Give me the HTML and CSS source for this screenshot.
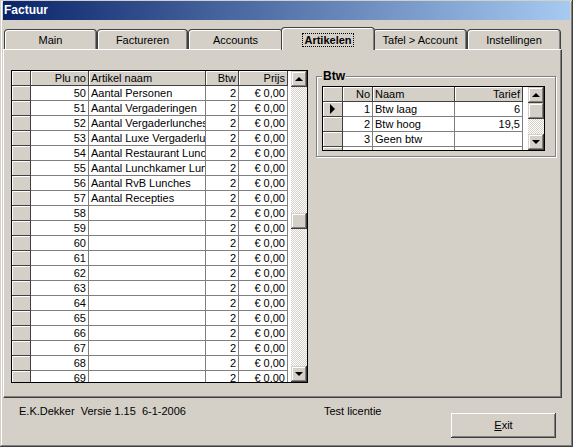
FILE: index.html
```html
<!DOCTYPE html>
<html lang="nl">
<head>
    <meta charset="UTF-8">
    <meta name="viewport" content="width=device-width, initial-scale=1.0">
    <title>Factuur</title>
    <link rel="stylesheet" href="styles.css">
</head>
<body>
    <div class="window">
        <div class="titlebar">Factuur</div>

        <div class="tabs">
            <div class="tab tab-main">Main</div>
            <div class="tab tab-fact">Factureren</div>
            <div class="tab tab-acc">Accounts</div>
            <div class="tab tab-art active"><span class="focus">Artikelen</span></div>
            <div class="tab tab-tafel">Tafel &gt; Account</div>
            <div class="tab tab-inst">Instellingen</div>
        </div>

        <div class="sheet">
            <!-- artikelen -->
            <div class="grid main-grid">
                <div class="grid-body">
                    <div class="row head"><span class="ind"></span><span class="c-plu num">Plu no</span><span class="c-naam">Artikel naam</span><span class="c-btw num">Btw</span><span class="c-prijs num">Prijs</span></div>
                    <div class="row"><span class="ind"></span><span class="c-plu num">50</span><span class="c-naam">Aantal Personen</span><span class="c-btw num">2</span><span class="c-prijs num">€ 0,00</span></div>
                    <div class="row"><span class="ind"></span><span class="c-plu num">51</span><span class="c-naam">Aantal Vergaderingen</span><span class="c-btw num">2</span><span class="c-prijs num">€ 0,00</span></div>
                    <div class="row"><span class="ind"></span><span class="c-plu num">52</span><span class="c-naam">Aantal Vergaderlunches</span><span class="c-btw num">2</span><span class="c-prijs num">€ 0,00</span></div>
                    <div class="row"><span class="ind"></span><span class="c-plu num">53</span><span class="c-naam">Aantal Luxe Vergaderlunches</span><span class="c-btw num">2</span><span class="c-prijs num">€ 0,00</span></div>
                    <div class="row"><span class="ind"></span><span class="c-plu num">54</span><span class="c-naam">Aantal Restaurant Lunches</span><span class="c-btw num">2</span><span class="c-prijs num">€ 0,00</span></div>
                    <div class="row"><span class="ind"></span><span class="c-plu num">55</span><span class="c-naam">Aantal Lunchkamer Lunches</span><span class="c-btw num">2</span><span class="c-prijs num">€ 0,00</span></div>
                    <div class="row"><span class="ind"></span><span class="c-plu num">56</span><span class="c-naam">Aantal RvB Lunches</span><span class="c-btw num">2</span><span class="c-prijs num">€ 0,00</span></div>
                    <div class="row"><span class="ind"></span><span class="c-plu num">57</span><span class="c-naam">Aantal Recepties</span><span class="c-btw num">2</span><span class="c-prijs num">€ 0,00</span></div>
                    <div class="row"><span class="ind"></span><span class="c-plu num">58</span><span class="c-naam"></span><span class="c-btw num">2</span><span class="c-prijs num">€ 0,00</span></div>
                    <div class="row"><span class="ind"></span><span class="c-plu num">59</span><span class="c-naam"></span><span class="c-btw num">2</span><span class="c-prijs num">€ 0,00</span></div>
                    <div class="row"><span class="ind"></span><span class="c-plu num">60</span><span class="c-naam"></span><span class="c-btw num">2</span><span class="c-prijs num">€ 0,00</span></div>
                    <div class="row"><span class="ind"></span><span class="c-plu num">61</span><span class="c-naam"></span><span class="c-btw num">2</span><span class="c-prijs num">€ 0,00</span></div>
                    <div class="row"><span class="ind"></span><span class="c-plu num">62</span><span class="c-naam"></span><span class="c-btw num">2</span><span class="c-prijs num">€ 0,00</span></div>
                    <div class="row"><span class="ind"></span><span class="c-plu num">63</span><span class="c-naam"></span><span class="c-btw num">2</span><span class="c-prijs num">€ 0,00</span></div>
                    <div class="row"><span class="ind"></span><span class="c-plu num">64</span><span class="c-naam"></span><span class="c-btw num">2</span><span class="c-prijs num">€ 0,00</span></div>
                    <div class="row"><span class="ind"></span><span class="c-plu num">65</span><span class="c-naam"></span><span class="c-btw num">2</span><span class="c-prijs num">€ 0,00</span></div>
                    <div class="row"><span class="ind"></span><span class="c-plu num">66</span><span class="c-naam"></span><span class="c-btw num">2</span><span class="c-prijs num">€ 0,00</span></div>
                    <div class="row"><span class="ind"></span><span class="c-plu num">67</span><span class="c-naam"></span><span class="c-btw num">2</span><span class="c-prijs num">€ 0,00</span></div>
                    <div class="row"><span class="ind"></span><span class="c-plu num">68</span><span class="c-naam"></span><span class="c-btw num">2</span><span class="c-prijs num">€ 0,00</span></div>
                    <div class="row"><span class="ind"></span><span class="c-plu num">69</span><span class="c-naam"></span><span class="c-btw num">2</span><span class="c-prijs num">€ 0,00</span></div>
                </div>
                <div class="vscroll">
                    <div class="sb-btn"><span class="arrow-up"></span></div>
                    <div class="sb-gap"></div>
                    <div class="sb-thumb"></div>
                    <div class="sb-track"></div>
                    <div class="sb-btn"><span class="arrow-down"></span></div>
                </div>
            </div>

            <!-- btw tarieven -->
            <div class="groupbox">
                <span class="caption">Btw</span>
                <div class="grid btw-grid">
                    <div class="grid-body">
                        <div class="row head"><span class="ind"></span><span class="c-no num">No</span><span class="c-btwnaam">Naam</span><span class="c-tarief num">Tarief</span></div>
                        <div class="row"><span class="ind"><span class="ptr"></span></span><span class="c-no num">1</span><span class="c-btwnaam">Btw laag</span><span class="c-tarief num">6</span></div>
                        <div class="row"><span class="ind"></span><span class="c-no num">2</span><span class="c-btwnaam">Btw hoog</span><span class="c-tarief num">19,5</span></div>
                        <div class="row"><span class="ind"></span><span class="c-no num">3</span><span class="c-btwnaam">Geen btw</span><span class="c-tarief num"></span></div>
                        <div class="row"><span class="ind"></span><span class="c-no num">4</span><span class="c-btwnaam"></span><span class="c-tarief num"></span></div>
                    </div>
                    <div class="vscroll">
                        <div class="sb-btn"><span class="arrow-up"></span></div>
                        <div class="sb-thumb"></div>
                        <div class="sb-track"></div>
                        <div class="sb-btn"><span class="arrow-down"></span></div>
                    </div>
                </div>
            </div>
        </div>

        <div class="statusbar">
            <span class="info">E.K.Dekker  Versie 1.15  6-1-2006</span>
            <span class="licence">Test licentie</span>
            <button class="btn"><u>E</u>xit</button>
        </div>
    </div>
</body>
</html>
```

FILE: styles.css
```css
* {
    box-sizing: border-box;
    margin: 0;
    padding: 0;
}

body {
    font-family: 'Liberation Sans', Arial, sans-serif;
    font-size: 11px;
    color: #000;
    background-color: #d4d0c8;
}

.window {
    width: 573px;
    height: 447px;
    padding: 1px 3px 3px 3px;
    background-color: #d4d0c8;
    box-shadow: inset -1px -1px #404040, inset 1px 1px #d4d0c8, inset -2px -2px #808080, inset 2px 2px #fff;
    display: flex;
    flex-direction: column;
}

.titlebar {
    height: 19px;
    line-height: 19px;
    padding-left: 1px;
    color: #fff;
    font-size: 12px;
    font-weight: bold;
    background: linear-gradient(to right, #0a246a, #a6caf0);
}

/* tabs */
.tabs {
    display: flex;
    align-items: flex-end;
    height: 22px;
    margin-top: 7px;
    padding-left: 1px;
}

.tab {
    flex: none;
    height: 20px;
    line-height: 21px;
    text-align: center;
    background-color: #d4d0c8;
    border: 1px solid #404040;
    border-bottom: none;
    border-radius: 4px 4px 0 0;
    box-shadow: inset 1px 1px #fff, inset -1px 0 #808080;
}

.tab-main { width: 93px; }
.tab-fact { width: 91px; }
.tab-acc { width: 95px; }
.tab-art { width: 94px; }
.tab-tafel { width: 94px; }
.tab-inst { width: 94px; }

.tab.active {
    height: 23px;
    line-height: 25px;
    margin: 0 -2px -1px -2px;
    position: relative;
    z-index: 1;
    font-weight: bold;
}

.focus {
    outline: 1px dotted #000;
    padding: 0 1px;
}

.sheet {
    width: 559px;
    height: 349px;
    border: 1px solid;
    border-color: #fff #404040 #404040 #fff;
    box-shadow: inset -1px -1px #808080;
    padding: 20px 0 0 7px;
    display: flex;
    align-items: flex-start;
    gap: 8px;
}

/* grids */
.grid {
    display: flex;
    flex: none;
    border: 1px solid #000;
    background-color: #fff;
}

.main-grid {
    width: 297px;
    height: 313px;
}

.btw-grid {
    width: 223px;
    height: 65px;
}

.grid-body {
    flex: none;
    overflow: hidden;
}

.main-grid .grid-body { width: 279px; }
.btw-grid .grid-body { width: 205px; }

.row {
    display: flex;
    height: 15px;
}

.row > span {
    flex: none;
    height: 15px;
    line-height: 14px;
    padding: 0 2px;
    white-space: nowrap;
    overflow: hidden;
    border-right: 1px solid #808080;
    border-bottom: 1px solid #808080;
}

.row > .ind,
.head > span {
    background-color: #d4d0c8;
    border-color: #404040;
    box-shadow: inset 1px 1px #fff;
}

.ind {
    display: flex;
    align-items: center;
    justify-content: center;
}

.num {
    text-align: right;
}

.main-grid .ind { width: 19px; }
.c-plu { width: 58px; }
.c-naam { width: 117px; }
.c-btw { width: 33px; }
.c-prijs { width: 49px; }

.btw-grid .ind { width: 20px; }
.c-no { width: 30px; }
.c-btwnaam { width: 82px; }
.c-tarief { width: 68px; }

.ptr {
    width: 0;
    height: 0;
    border-top: 5px solid transparent;
    border-bottom: 5px solid transparent;
    border-left: 5px solid #000;
}

/* scrollbars */
.vscroll {
    width: 16px;
    margin-left: auto;
    display: flex;
    flex-direction: column;
    background: repeating-conic-gradient(#d4d0c8 0 25%, #fff 0 50%) 0 0 / 2px 2px;
}

.sb-btn,
.sb-thumb {
    flex: none;
    height: 16px;
    background-color: #d4d0c8;
    box-shadow: inset -1px -1px #404040, inset 1px 1px #d4d0c8, inset -2px -2px #808080, inset 2px 2px #fff;
    display: flex;
    align-items: center;
    justify-content: center;
}

.sb-gap {
    flex: none;
    height: 126px;
}

.sb-track {
    flex: 1;
}

.arrow-up,
.arrow-down {
    width: 0;
    height: 0;
    border-left: 4px solid transparent;
    border-right: 4px solid transparent;
}

.arrow-up { border-bottom: 4px solid #000; }
.arrow-down { border-top: 4px solid #000; }

/* groupbox */
.groupbox {
    position: relative;
    flex: none;
    width: 240px;
    height: 81px;
    margin-top: 6px;
    border: 1px solid #808080;
    box-shadow: inset 1px 1px #fff, 1px 1px #fff;
    padding: 9px 10px 5px 5px;
}

.caption {
    position: absolute;
    top: -7px;
    left: 5px;
    padding: 0 1px;
    line-height: 13px;
    font-size: 12px;
    font-weight: bold;
    background-color: #d4d0c8;
}

/* bottom */
.statusbar {
    display: flex;
    align-items: flex-start;
    height: 46px;
    padding: 7px 0 0 16px;
    line-height: 13px;
}

.info {
    width: 305px;
    white-space: pre;
}

.licence {
    width: 127px;
}

.btn {
    width: 105px;
    height: 25px;
    margin-top: 8px;
    font: inherit;
    color: #000;
    border: none;
    background-color: #d4d0c8;
    box-shadow: inset -1px -1px #404040, inset 1px 1px #fff, inset -2px -2px #808080, inset 2px 2px #d4d0c8;
    cursor: pointer;
}
```
